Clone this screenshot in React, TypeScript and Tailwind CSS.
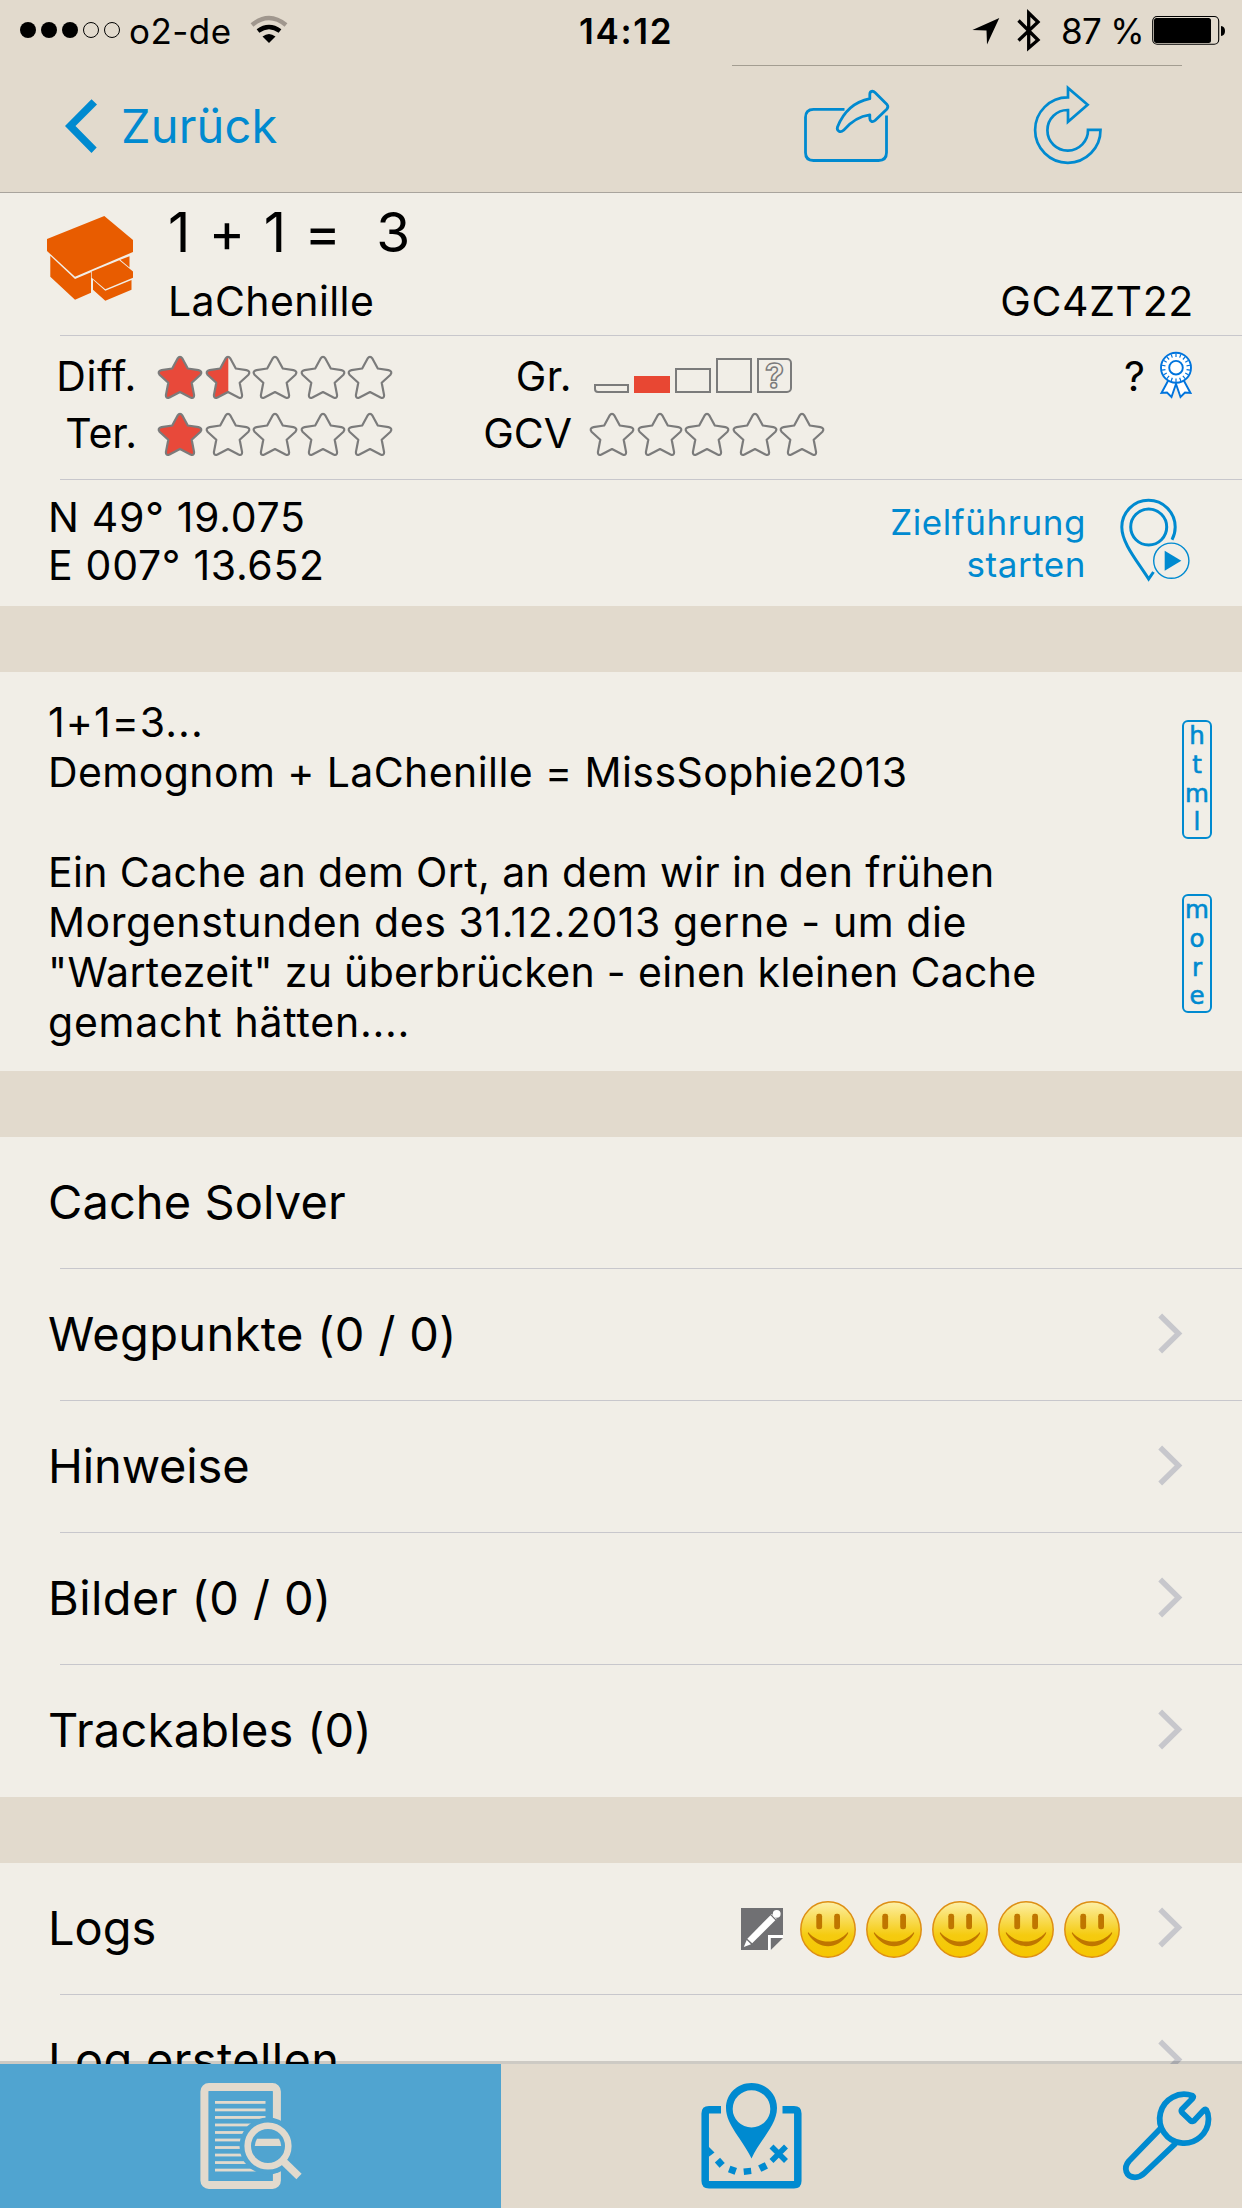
import React from 'react';

const STAR =
  'M20 3.2 Q22.5 -0.6 25 3.2 L30.3 13 L41 14.6 Q45.4 15.8 43 19.2 L34.2 27.2 L36.6 39.6 Q36.8 43.6 33 42 L22.5 36.6 L12 42 Q8.2 43.6 8.4 39.6 L10.8 27.2 L2 19.2 Q-0.4 15.8 4 14.6 L14.7 13 Z';

function Star({ fill }: { fill: number }) {
  return (
    <svg className="block h-[46px] w-[47.6px] shrink-0" viewBox="-0.5 -0.5 47.6 46">
      {fill === 1 && <path d={STAR} fill="#e8493a" />}
      {fill === 0.5 && (
        <>
          <clipPath id="leftHalf">
            <rect x="-1" y="-1" width="23.8" height="48" />
          </clipPath>
          <path d={STAR} fill="#e8493a" clipPath="url(#leftHalf)" />
        </>
      )}
      <path d={STAR} fill="none" stroke="#7b7b7b" strokeWidth="2.2" strokeLinejoin="round" />
    </svg>
  );
}

function Stars({ value }: { value: number }) {
  return (
    <div className="flex pt-[7px]">
      {[0, 1, 2, 3, 4].map((i) => (
        <Star key={i} fill={Math.max(0, Math.min(1, value - i))} />
      ))}
    </div>
  );
}

function StatusBar() {
  return (
    <div className="flex h-[65px] shrink-0 items-start text-[35px] leading-[63px] text-black">
      <div className="flex w-[579px] items-start">
        <svg className="block" width="129" height="60" viewBox="0 0 129 60">
          {[28, 49, 70].map((x) => (
            <circle key={x} cx={x} cy="30" r="8" fill="#000" />
          ))}
          {[91, 112].map((x) => (
            <circle key={x} cx={x} cy="30" r="7.5" fill="none" stroke="#000" strokeWidth="1" />
          ))}
        </svg>
        <span className="tracking-[0.45px]">o2-de</span>
        <svg className="ml-[17px] block" width="40" height="60" viewBox="247.5 0 40 60">
          <path d="M250.5 25 Q267.5 11 284.5 25" fill="none" stroke="#a0978e" strokeWidth="4.4" />
          <path d="M256.5 31 Q267.5 23 278.5 31" fill="none" stroke="#000" strokeWidth="4.6" />
          <path d="M261 36.5 Q267.5 31.5 274 36.5 L267.5 43 Z" fill="#000" />
        </svg>
      </div>
      <span className="font-semibold tracking-[1.7px]">14:12</span>
      <div className="ml-auto flex items-start">
        <svg className="block" width="89" height="60" viewBox="972 0 89 60">
          <path d="M972.4 30 L999.3 18 L987 44.5 L986.5 30.5 Z" fill="#000" />
          <path
            d="M1018.5 20.5 L1038 40 L1028.7 48 V13 L1038 22 L1018.5 40.5"
            fill="none"
            stroke="#000"
            strokeWidth="3.3"
          />
        </svg>
        <span className="w-[91px] tracking-[-0.7px]">87 %</span>
        <svg className="block" width="90" height="60" viewBox="1152 0 90 60">
          <rect x="1152.7" y="16.5" width="66" height="27.7" rx="4.5" fill="none" stroke="#000" strokeWidth="1.1" />
          <rect x="1154" y="18" width="57" height="25" rx="2.5" fill="#000" />
          <path d="M1221 26 Q1225 26.5 1225 31 Q1225 35.5 1221 36 Z" fill="#000" />
        </svg>
      </div>
    </div>
  );
}

function NavBar() {
  return (
    <div className="flex h-[128px] shrink-0 flex-col border-b border-[#a9a49d]">
      <div className="mr-[60px] ml-auto h-px w-[450px] shrink-0 bg-[#a39d91]" />
      <div className="flex text-[47px] leading-[120px] text-[#008ad0]">
        <svg className="block" width="121" height="120" viewBox="0 66 121 120">
          <path d="M91.5 99.3 L97 104.5 L75.5 126 L96.7 147.5 L91.5 153 L65 126 Z" fill="#008ad0" />
        </svg>
        <span className="tracking-[0.15px]">Zurück</span>
        <svg
          className="ml-auto block"
          width="90"
          height="120"
          viewBox="802 66 90 120"
          fill="none"
          stroke="#008ad0"
          strokeWidth="2.8"
        >
          <path d="M844.5 109.3 H813.5 Q805.5 109.3 805.5 117.5 V152.5 Q805.5 160.5 813.5 160.5 H878.5 Q886.5 160.5 886.5 152.5 V115.5" />
          <path
            d="M837.5 127 C843.5 112 853.5 102 869.8 98.7 V94.5 C869.8 91 872.8 90.3 875 92.5 L887 104.5 Q888.7 106.7 887 108.9 L875 120.5 C872.5 122.5 869.8 121.5 869.8 118.5 V114.8 C860 116 850.5 122 843.5 130.3 C840.5 133 836.3 131 837.5 127 Z"
            strokeLinejoin="round"
          />
        </svg>
        <svg
          className="mr-[138px] ml-[140px] block"
          width="72"
          height="120"
          viewBox="1032 66 72 120"
          fill="none"
          stroke="#008ad0"
          strokeWidth="2.7"
        >
          <path d="M1068 97.4 A32.7 32.7 0 1 0 1100.5 129.8 H1088 A20.3 20.3 0 1 1 1068 110 V121.7 L1087.6 104.7 L1068 88 Z" />
        </svg>
      </div>
    </div>
  );
}

function BoxIcon() {
  return (
    <svg className="block" width="168" height="142" viewBox="0 193 168 142" fill="#e85c00">
      <path d="M47 239 L104.3 216 L133 240 V252 L75 276.7 L47 251 Z" />
      <path d="M50.3 255.7 L75 279 L91 272.3 V292.7 L75 299.7 L50.3 276.7 Z" />
      <path d="M91.7 271.5 L119.3 260.3 L133 271.5 V277.7 L105.3 289.2 L91.7 277.7 Z" />
      <path d="M120.3 259.7 L129.5 256.3 V267.5 Z" />
      <path d="M93 279.7 L105.3 290.7 L131.5 280 V289.7 L105.3 300.7 L93 289.7 Z" />
    </svg>
  );
}

function Badge() {
  const rays = Array.from({ length: 18 }, (_, i) => i * 20);
  return (
    <svg className="block" width="36" height="56" viewBox="1158 348 36 56" fill="#fff" stroke="#0074dd" strokeWidth="1.9">
      <path d="M1168.5 380 L1161.5 393 L1167 392.5 L1171.5 397 L1176 384 L1180.5 397 L1185 392.5 L1190.5 393 L1183.5 380 Z" />
      <circle cx="1176" cy="367.7" r="15" />
      {rays.map((a) => (
        <line key={a} x1="1176" y1="353.5" x2="1176" y2="357" strokeWidth="1.2" transform={`rotate(${a} 1176 367.7)`} />
      ))}
      <circle cx="1176" cy="367.7" r="6.8" />
    </svg>
  );
}

function SizeBoxes() {
  return (
    <div className="ml-[5px] flex h-[45px] items-end gap-[5px] text-[#7b7b7b]">
      <div className="h-[9px] w-[35px] rounded-bl-[4px] border-2 border-[#7b7b7b]" />
      <div className="h-[17px] w-[36px] bg-[#e84733]" />
      <div className="h-[25px] w-[36px] border-2 border-[#7b7b7b]" />
      <div className="h-[35px] w-[36px] border-2 border-[#7b7b7b]" />
      <div className="flex h-[35px] w-[35px] items-center justify-center rounded-r-[5px] border-2 border-[#7b7b7b]">
        <span className="text-[34px] leading-[31px] font-bold text-[#f1eee7] [-webkit-text-stroke:1.5px_#7b7b7b]">?</span>
      </div>
    </div>
  );
}

function Divider() {
  return <div className="ml-[60px] h-px shrink-0 bg-[#c8c7cc]" />;
}

function InfoPanel() {
  return (
    <section className="flex h-[413px] shrink-0 flex-col bg-[#f1eee7] text-[41px]">
      <div className="flex h-[142px] shrink-0">
        <BoxIcon />
        <div className="flex grow flex-col">
          <h1 className="text-[55px] leading-[79px] tracking-[1.5px] whitespace-pre">1 + 1 =  3</h1>
          <div className="flex justify-between pr-[48px] leading-[58px]">
            <span className="tracking-[0.4px]">LaChenille</span>
            <span className="tracking-[0.65px]">GC4ZT22</span>
          </div>
        </div>
      </div>
      <Divider />
      <div className="flex h-[143px] shrink-0 pt-[12px] leading-[57px]">
        <div className="w-[137px] text-right">
          <p className="tracking-[0.6px]">Diff.</p>
          <p>Ter.</p>
        </div>
        <div className="ml-[20px] w-[238px]">
          <div className="h-[57px]">
            <Stars value={1.5} />
          </div>
          <Stars value={1} />
        </div>
        <div className="w-[177px] text-right">
          <p className="tracking-[0.3px]">Gr.</p>
          <p>GCV</p>
        </div>
        <div className="ml-[17px] w-[238px]">
          <div className="h-[57px]">
            <SizeBoxes />
          </div>
          <Stars value={0} />
        </div>
        <span className="ml-auto">?</span>
        <div className="mr-[48px] ml-[13px]">
          <Badge />
        </div>
      </div>
      <Divider />
      <div className="flex h-[126px] shrink-0">
        <div className="pt-[13px] pl-[48px] leading-[48px] tracking-[0.7px]">
          <p>N 49° 19.075</p>
          <p>E 007° 13.652</p>
        </div>
        <div className="ml-auto pt-[21px] text-right text-[35px] leading-[42px] tracking-[0.55px] text-[#008ad0]">
          <p>Zielführung</p>
          <p>starten</p>
        </div>
        <svg
          className="ml-[32px] block"
          width="124"
          height="126"
          viewBox="1118 480 124 126"
          fill="none"
          stroke="#008ad0"
          strokeWidth="3"
        >
          <path d="M1172 539.8 C1174.3 535.5 1175.2 531 1175.2 527 A26.7 26.7 0 0 0 1121.8 527 C1121.8 543 1136.5 560 1148.6 579 L1153.5 572" />
          <circle cx="1148.7" cy="527" r="18" />
          <circle cx="1171.3" cy="560.7" r="17.6" strokeWidth="1.4" />
          <path d="M1164.7 550.7 L1181.3 560.7 L1164.7 570.7 Z" fill="#008ad0" stroke="none" />
        </svg>
      </div>
    </section>
  );
}

function Tag({ text }: { text: string }) {
  return (
    <div className="flex h-[119px] w-[30px] flex-col items-center rounded-[6px] border-2 border-[#008ad0] font-['DejaVu_Sans',sans-serif] text-[24.5px] leading-[28.8px] text-[#008ad0] [-webkit-text-stroke:0.6px_#008ad0]">
      {text.split('').map((ch, i) => (
        <span key={i} className="block h-[28.8px]">
          {ch}
        </span>
      ))}
    </div>
  );
}

function Description() {
  return (
    <section className="flex h-[399px] shrink-0 justify-between bg-[#f1eee7] pt-[25px] pl-[48px] text-[41px] leading-[50px] whitespace-nowrap">
      <div>
        <p className="tracking-[1.05px]">1+1=3...</p>
        <p className="tracking-[0.42px]">Demognom + LaChenille = MissSophie2013</p>
        <p className="h-[50px]" />
        <p className="tracking-[0.38px]">Ein Cache an dem Ort, an dem wir in den frühen</p>
        <p className="tracking-[0.58px]">Morgenstunden des 31.12.2013 gerne - um die</p>
        <p className="tracking-[0.33px]">"Wartezeit" zu überbrücken - einen kleinen Cache</p>
        <p className="tracking-[0.75px]">gemacht hätten....</p>
      </div>
      <div className="mt-[23px] mr-[30px] flex flex-col gap-[55px]">
        <Tag text="html" />
        <Tag text="more" />
      </div>
    </section>
  );
}

function Chevron() {
  return (
    <svg className="mr-[56px] block" width="30" height="129" viewBox="1156 0 30 129">
      <path d="M1160.2 46.5 L1178.5 64.5 L1160.2 82.5" fill="none" stroke="#c7c7cc" strokeWidth="5.4" />
    </svg>
  );
}

function Row({ label, chevron = true, children }: { label: React.ReactNode; chevron?: boolean; children?: React.ReactNode }) {
  return (
    <div className="flex h-[131px] shrink-0 items-start pl-[48px] text-[47px] leading-[130px]">
      {label}
      <div className="ml-auto flex items-start">
        {children}
        {chevron && <Chevron />}
      </div>
    </div>
  );
}

function NoteIcon() {
  return (
    <svg className="mt-[45px] mr-[17px] block" width="42" height="42" viewBox="0 0 42 42">
      <path d="M0 0 H42 V28 H28 V42 H0 Z" fill="#707073" />
      <path d="M27 42 V27 H42 V30 H29.8 V42 Z" fill="#fff" />
      <path d="M29.8 30 H42 L29.8 42 Z" fill="#707073" />
      <circle cx="35.7" cy="5.8" r="3.9" fill="#fff" />
      <path d="M29.5 7.2 L34.3 12.2 L11.2 35.2 L6.3 30.7 Z" fill="#fff" />
      <path d="M30.5 6 L35.5 11.2" stroke="#fff" strokeWidth="1" />
      <path d="M5.7 32 L10 36.3 L2.8 39 Z" fill="#fff" />
    </svg>
  );
}

function Smiley() {
  return (
    <svg className="mt-[38px] mr-[10px] block" width="56" height="57" viewBox="0 0 56 57">
      <defs>
        <linearGradient id="face" x1="0" y1="0" x2="0" y2="1">
          <stop offset="0" stopColor="#fdf0a8" />
          <stop offset="0.2" stopColor="#fae373" />
          <stop offset="0.6" stopColor="#f5cb10" />
          <stop offset="1" stopColor="#f6c600" />
        </linearGradient>
      </defs>
      <ellipse cx="28" cy="28.5" rx="27.2" ry="27.7" fill="url(#face)" stroke="#de8f14" strokeWidth="1.5" />
      <rect x="16.3" y="12.8" width="5.8" height="15.5" rx="2.4" fill="#bf7600" />
      <rect x="34.2" y="12.8" width="5.8" height="15.5" rx="2.4" fill="#bf7600" />
      <path d="M8 31 C19 43.8 37 43.8 48 31 Q48.5 32 47.5 33.5 C38 49 18 49 8.5 33.5 Q7.5 32 8 31 Z" fill="#bf7600" />
    </svg>
  );
}

function TabBar() {
  return (
    <nav className="absolute inset-x-0 bottom-0 flex h-[147px] border-t-[3px] border-black/15 bg-[#e2dacd] bg-clip-padding">
      <div className="w-[501px] shrink-0 bg-[#50a4d0]">
        <svg className="ml-[195px] block" width="120" height="144" viewBox="195 2064 120 144">
          <rect x="204.4" y="2087" width="72.5" height="98" rx="4.5" fill="none" stroke="#e2dacd" strokeWidth="8" />
          {[0, 1, 2, 3, 4, 5, 6, 7, 8, 9].map((i) => (
            <rect key={i} x="215" y={2101 + i * 7.52} width="50.5" height="2.8" fill="#e2dacd" />
          ))}
          <circle cx="268" cy="2146" r="28.5" fill="#50a4d0" />
          <circle cx="268" cy="2146" r="20.3" fill="none" stroke="#e2dacd" strokeWidth="6.6" />
          <path d="M257 2138.7 H279 Q281 2142 281.2 2146 H254.8 Q255 2142 257 2138.7 Z" fill="#e2dacd" />
          <path d="M282 2160 L299 2176.5" stroke="#e2dacd" strokeWidth="7.5" />
        </svg>
      </div>
      <svg className="ml-[197px] block" width="107" height="144" viewBox="698 2064 107 144">
        <g fill="none" stroke="#008ad0" strokeWidth="7.5">
          <path d="M721 2109.8 H709 Q705.2 2109.8 705.2 2113.5 V2181 Q705.2 2184.7 709 2184.7 H794 Q797.8 2184.7 797.8 2181 V2113.5 Q797.8 2109.8 794 2109.8 H782.5" />
          <path d="M771.5 2146.5 L786 2161 M786 2146.5 L771.5 2161" strokeWidth="5.6" />
        </g>
        <path
          fillRule="evenodd"
          fill="#008ad0"
          d="M751.5 2158.5 C743 2140 726 2125 726 2108 C726 2094 737 2083 751.5 2083 C766 2083 777 2094 777 2108 C777 2125 760 2140 751.5 2158.5 Z M751.5 2090.3 A18.8 18.6 0 1 0 751.5 2127.5 A18.8 18.6 0 1 0 751.5 2090.3 Z"
        />
        <g fill="#008ad0">
          <path d="M708 2146 L714.5 2152.5 L708.5 2157 Z" />
          <rect x="716.3" y="2159.3" width="7" height="7" transform="rotate(48 719.8 2162.8)" />
          <rect x="729" y="2166.7" width="7" height="7" transform="rotate(20 732.5 2170.2)" />
          <rect x="743.7" y="2168" width="7.5" height="6.5" transform="rotate(-6 747.5 2171.2)" />
          <rect x="759.3" y="2163.5" width="7.5" height="7" transform="rotate(-27 763 2167)" />
        </g>
      </svg>
      <svg
        className="ml-auto block"
        width="125"
        height="144"
        viewBox="1117 2064 125 144"
        fill="none"
        stroke="#008ad0"
        strokeWidth="5.8"
        strokeLinejoin="round"
      >
        <path d="M1192.5 2095.8 A24.4 24.4 0 1 0 1208.5 2119 Q1208.5 2113.5 1206.3 2110 Q1205 2109 1203.5 2110.5 L1194 2120.7 Q1192 2122 1190.3 2120.5 L1182 2112.5 Q1180.8 2111 1182 2109.2 L1192.5 2098.5 Q1193.8 2096.8 1192.5 2095.8 Z" />
        <path d="M1161 2128 L1129 2161 C1123 2168 1126 2177.3 1135 2177.3 C1139 2177.3 1142 2175.5 1144.5 2173 L1175.5 2143.5" />
      </svg>
    </nav>
  );
}

export default function App() {
  return (
    <div className="relative flex h-[2208px] w-[1242px] flex-col overflow-hidden bg-[#e2dacd] font-[Inter,sans-serif] text-black">
      <StatusBar />
      <NavBar />
      <InfoPanel />
      <div className="h-[66px] shrink-0" />
      <Description />
      <div className="h-[66px] shrink-0" />
      <section className="flex shrink-0 flex-col bg-[#f1eee7]">
        <Row label={<span className="tracking-[0.1px]">Cache Solver</span>} chevron={false} />
        <Divider />
        <Row label={<span className="tracking-[0.35px]">Wegpunkte (0 / 0)</span>} />
        <Divider />
        <Row label={<span className="tracking-[-0.15px]">Hinweise</span>} />
        <Divider />
        <Row label={<span className="tracking-[0.43px]">Bilder (0 / 0)</span>} />
        <Divider />
        <Row label={<span className="tracking-[0.25px]">Trackables (0)</span>} />
        <div className="h-px" />
      </section>
      <div className="h-[66px] shrink-0" />
      <section className="flex shrink-0 flex-col bg-[#f1eee7]">
        <Row label={<span>Logs</span>}>
          <NoteIcon />
          {[0, 1, 2, 3, 4].map((i) => (
            <Smiley key={i} />
          ))}
          <div className="w-[26px]" />
        </Row>
        <Divider />
        <Row label={<span className="tracking-[0.33px]">Log erstellen</span>} />
      </section>
      <TabBar />
    </div>
  );
}
